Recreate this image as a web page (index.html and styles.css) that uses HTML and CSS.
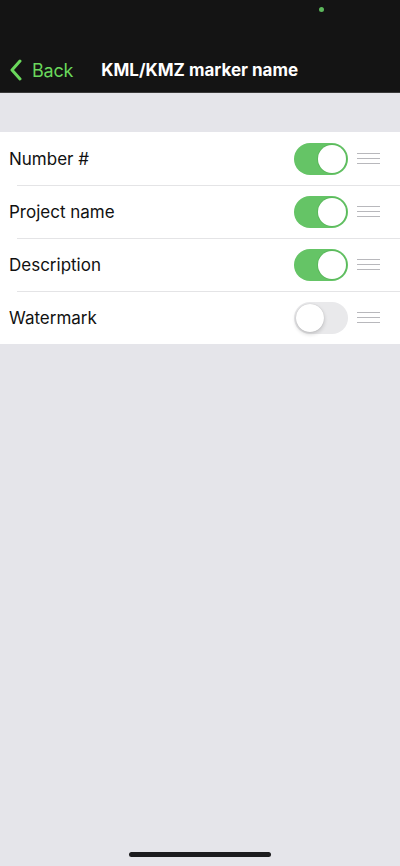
FILE: index.html
```html
<!DOCTYPE html>
<html lang="en">
<head>
    <meta charset="UTF-8">
    <meta name="viewport" content="width=device-width, initial-scale=1.0">
    <title>KML/KMZ marker name</title>
    <link rel="stylesheet" href="styles.css">
</head>
<body>
    <div class="header">
        <div class="status-bar"><span class="cam-dot"></span></div>
        <div class="nav-bar">
            <a class="back" href="#">
                <svg width="14" height="22" viewBox="0 0 14 22"><path d="M11 2 L3 11 L11 20" fill="none" stroke="currentColor" stroke-width="3" stroke-linecap="round" stroke-linejoin="round"/></svg>
                <span>Back</span>
            </a>
            <h1 class="title">KML/KMZ marker name</h1>
        </div>
    </div>

    <div class="content">
        <ul class="list">
            <li class="row">
                <span class="label">Number #</span>
                <span class="switch on"><span class="knob"></span></span>
                <span class="handle"><i></i><i></i><i></i></span>
            </li>
            <li class="row">
                <span class="label">Project name</span>
                <span class="switch on"><span class="knob"></span></span>
                <span class="handle"><i></i><i></i><i></i></span>
            </li>
            <li class="row">
                <span class="label">Description</span>
                <span class="switch on"><span class="knob"></span></span>
                <span class="handle"><i></i><i></i><i></i></span>
            </li>
            <li class="row">
                <span class="label">Watermark</span>
                <span class="switch"><span class="knob"></span></span>
                <span class="handle"><i></i><i></i><i></i></span>
            </li>
        </ul>
        <div class="home-indicator"></div>
    </div>
</body>
</html>
```

FILE: styles.css
```css
body {
    margin: 0;
    padding: 0;
    width: 400px;
    height: 866px;
    display: flex;
    flex-direction: column;
    font-family: 'Inter', 'Liberation Sans', sans-serif;
    background-color: #e5e5ea;
    overflow: hidden;
}
.header {
    background-color: #141414;
    border-bottom: 1px solid #3a3a3a;
    height: 92px;
    display: flex;
    flex-direction: column;
}
.status-bar {
    height: 50px;
    position: relative;
}
.cam-dot {
    position: absolute;
    top: 7px;
    left: 319px;
    width: 5px;
    height: 5px;
    border-radius: 50%;
    background-color: #5cb85c;
}
.nav-bar {
    flex: 1;
    display: flex;
    align-items: center;
    padding-bottom: 2px;
}
.back {
    display: flex;
    align-items: center;
    gap: 9px;
    margin-left: 9px;
    color: #6ad85c;
    text-decoration: none;
    font-size: 18px;
    letter-spacing: -0.2px;
}
.title {
    margin: 0 0 0 28px;
    color: #fff;
    font-size: 17px;
    font-weight: 700;
}
.content {
    flex: 1;
    display: flex;
    flex-direction: column;
    padding-top: 39px;
}
.list {
    list-style: none;
    margin: 0;
    padding: 0;
    background-color: #fff;
}
.row {
    height: 53px;
    display: flex;
    align-items: center;
    padding-left: 9px;
    position: relative;
}
.row + .row::before {
    content: '';
    position: absolute;
    top: 0;
    left: 17px;
    right: 0;
    border-top: 1px solid #e4e4e6;
}
.label {
    flex: 1;
    font-size: 17px;
    color: #111;
}
.switch {
    width: 54px;
    height: 32px;
    border-radius: 16px;
    background-color: #e9e9eb;
    position: relative;
    box-sizing: border-box;
}
.switch.on {
    background-color: #65c466;
}
.knob {
    position: absolute;
    top: 2px;
    left: 2px;
    width: 28px;
    height: 28px;
    border-radius: 50%;
    background-color: #fff;
    box-shadow: 0 2px 4px rgba(0, 0, 0, 0.18), 0 0 1px rgba(0, 0, 0, 0.2);
}
.switch.on .knob {
    left: 24px;
    box-shadow: 0 0 0 1px #5ab85b;
}
.handle {
    width: 23px;
    margin: 0 20px 0 9px;
    display: flex;
    flex-direction: column;
    gap: 4px;
}
.handle i {
    display: block;
    height: 1px;
    background-color: #b8b8bc;
}
.home-indicator {
    width: 142px;
    height: 5px;
    border-radius: 3px;
    background-color: #1c1c1e;
    margin: auto auto 9px;
}
```
